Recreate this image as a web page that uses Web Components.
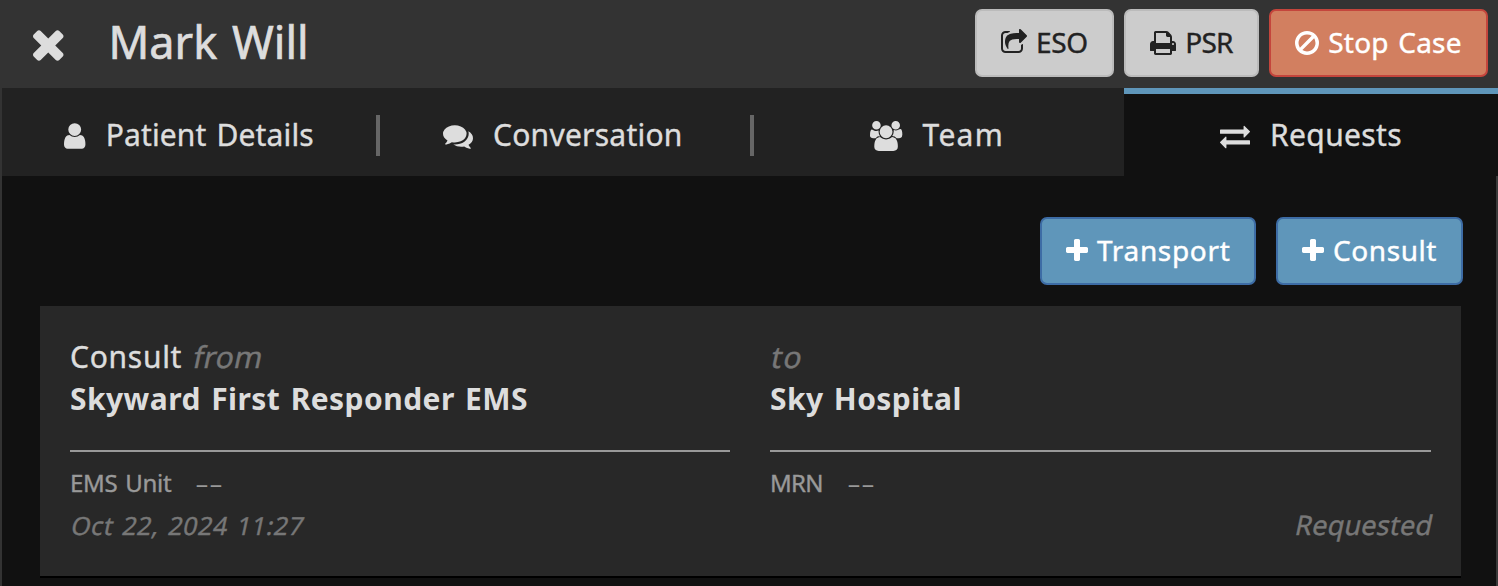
<!DOCTYPE html>
<html lang="en">
<head>
<meta charset="utf-8">
<title>Mark Will</title>
<style>
html,body{margin:0;height:100%;overflow:hidden;background:#111}
body{font-family:"Noto Sans","Open Sans",sans-serif;color:#ddd}
</style>
</head>
<body>
<case-view></case-view>
<script>
const ICONS = {
  times:['302 238 1188 1316','M1490 1322q0 40-28 68l-136 136q-28 28-68 28t-68-28l-294-294-294 294q-28 28-68 28t-68-28l-136-136q-28-28-28-68t28-68l294-294-294-294q-28-28-28-68t28-68l136-136q28-28 68-28t68 28l294 294 294-294q28-28 68-28t68 28l136 136q28 28 28 68t-28 68l-294 294 294 294q28 28 28 68z'],
  user:['256 0 1280 1792','M1536 1399q0 109-62.5 187t-150.5 78h-854q-88 0-150.5-78t-62.5-187q0-85 8.5-160.5t31.5-152 58.5-131 94-89 134.5-34.5q131 128 313 128t313-128q76 0 134.5 34.5t94 89 58.5 131 31.5 152 8.5 160.5zm-256-887q0 159-112.5 271.5t-271.5 112.5-271.5-112.5-112.5-271.5 112.5-271.5 271.5-112.5 271.5 112.5 112.5 271.5z'],
  comments:['0 0 1792 1792','M1408 768q0 139-94 257t-256.5 186.5-353.5 68.5q-86 0-176-16-124 88-278 128-36 9-86 16h-3q-11 0-20.5-8t-11.5-21q-1-3-1-6.5t.5-6.5 2-6l2.5-5 3.5-5.5 4-5 4.5-5 4-4.5q5-6 23-25t26-29.5 22.5-29 25-38.5 20.5-44q-124-72-195-177t-71-224q0-139 94-257t256.5-186.5 353.5-68.5 353.5 68.5 256.5 186.5 94 257zm384 256q0 120-71 224.5t-195 176.5q10 24 20.5 44t25 38.5 22.5 29 26 29.5 23 25q1 1 4 4.5t4.5 5 4 5 3.5 5.5l2.5 5 2 6 .5 6.5-1 6.5q-3 14-13 22t-22 7q-50-7-86-16-154-40-278-128-90 16-176 16-271 0-472-132 58 4 88 4 161 0 309-45t264-129q125-92 192-212t67-254q0-77-23-152 129 71 204 178t75 230z'],
  users:['64 0 1920 1792','M657 896q-162 5-265 128h-134q-82 0-138-40.5t-56-118.5q0-353 124-353 6 0 43.5 21t97.5 42.5 119 21.5q67 0 133-23-5 37-5 66 0 159 93 293zm1071 637q0 120-73 189.5t-194 69.5h-874q-121 0-194-69.5t-73-189.5q0-53 3.5-103.5t14-109 26.5-108.5 43-97.5 62-81 85.5-53.5 111.5-20q10 0 43 21.5t73 48 107 48 135 21.5 135-21.5 107-48 73-48 43-21.5q61 0 111.5 20t85.5 53.5 62 81 43 97.5 26.5 108.5 14 109 3.5 103.5zm-1024-1277q0 106-75 181t-181 75-181-75-75-181 75-181 181-75 181 75 75 181zm704 384q0 159-112.5 271.5t-271.5 112.5-271.5-112.5-112.5-271.5 112.5-271.5 271.5-112.5 271.5 112.5 112.5 271.5zm576 225q0 78-56 118.5t-138 40.5h-134q-103-123-265-128 93-134 93-293 0-29-5-66 66 23 133 23 59 0 119-21.5t97.5-42.5 43.5-21q124 0 124 353zm-128-609q0 106-75 181t-181 75-181-75-75-181 75-181 181-75 181 75 75 181z'],
  exchange:['0 0 1792 1792','M1792 1184v192q0 13-9.5 22.5t-22.5 9.5h-1376v192q0 13-9.5 22.5t-22.5 9.5q-12 0-24-10l-319-320q-9-9-9-22 0-14 9-23l320-320q9-9 23-9 13 0 22.5 9.5t9.5 22.5v192h1376q13 0 22.5 9.5t9.5 22.5zm0-544q0 14-9 23l-320 320q-9 9-23 9-13 0-22.5-9.5t-9.5-22.5v-192h-1376q-13 0-22.5-9.5t-9.5-22.5v-192q0-13 9.5-22.5t22.5-9.5h1376v-192q0-14 9-23t23-9q12 0 24 10l319 319q9 9 9 23z'],
  plus:['192 0 1408 1792','M1600 736v192q0 40-28 68t-68 28h-416v416q0 40-28 68t-68 28h-192q-40 0-68-28t-28-68v-416h-416q-40 0-68-28t-28-68v-192q0-40 28-68t68-28h416v-416q0-40 28-68t68-28h192q40 0 68 28t28 68v416h416q40 0 68 28t28 68z'],
  ban:['128 0 1536 1792','M1440 893q0-161-87-295l-754 753q137 89 297 89 111 0 211.5-43.5t173.5-116.5 116-174.5 43-212.5zm-999 299l755-754q-135-91-300-91-148 0-273 73t-198 199-73 274q0 162 89 299zm1223-299q0 157-61 300t-163.5 246-245 164-298.5 61-298.5-61-245-164-163.5-246-61-300 61-299.5 163.5-245.5 245-164 298.5-61 298.5 61 245 164 163.5 245.5 61 299.5z'],
  print:['64 0 1664 1792','M448 1536h896v-256h-896v256zm0-640h896v-384h-160q-40 0-68-28t-28-68v-160h-640v640zm1152 64q0-26-19-45t-45-19-45 19-19 45 19 45 45 19 45-19 19-45zm128 0v416q0 13-9.5 22.5t-22.5 9.5h-224v160q0 40-28 68t-68 28h-960q-40 0-68-28t-28-68v-160h-224q-13 0-22.5-9.5t-9.5-22.5v-416q0-79 56.5-135.5t135.5-56.5h64v-544q0-40 28-68t68-28h672q40 0 88 20t76 48l152 152q28 28 48 76t20 88v256h64q79 0 135.5 56.5t56.5 135.5z'],
  share:['64 0 1664 1792','M1472 989v259q0 119-84.5 203.5t-203.5 84.5h-832q-119 0-203.5-84.5t-84.5-203.5v-832q0-119 84.5-203.5t203.5-84.5h255q13 0 22.5 9.5t9.5 22.5q0 27-26 32-77 26-133 60-10 4-16 4h-112q-66 0-113 47t-47 113v832q0 66 47 113t113 47h832q66 0 113-47t47-113v-214q0-19 18-29 28-13 54-37 16-16 35-8 21 9 21 29zm237-496l-384 384q-18 19-45 19-12 0-25-5-39-17-39-59v-192h-160q-323 0-438 131-119 137-74 473 3 23-20 34-8 2-12 2-16 0-26-13-10-14-21-31t-39.5-68.5-49.5-99.5-38.5-114-17.5-122q0-49 3.5-91t14-90 28-88 47-81.5 68.5-74 94.5-61.5 124.5-48.5 159.5-30.5 196.5-11h160v-192q0-42 39-59 13-5 25-5 26 0 45 19l384 384q19 19 19 45t-19 45z']
};

class Base extends HTMLElement {
  constructor(){ super(); this.attachShadow({mode:'open'}); }
}

/* Glyph whose height is set by its font size (1em = 1792 units). */
customElements.define('fa-icon', class extends Base {
  connectedCallback(){
    const [box, d] = ICONS[this.getAttribute('name')];
    const [, , w, h] = box.split(' ');
    this.shadowRoot.innerHTML = `<style>:host{display:block;flex:none}svg{display:block;fill:currentColor;overflow:visible}</style>
      <svg viewBox="${box}" style="width:${w/1792}em;height:${h/1792}em"><path d="${d}"/></svg>`;
  }
});

/* One line of text tracked so that it fills the given advance width. */
customElements.define('fit-text', class extends Base {
  connectedCallback(){
    this.shadowRoot.innerHTML = `<style>:host{display:block;flex:none;white-space:nowrap;word-spacing:.07em;-webkit-text-stroke:var(--stroke,.4px) currentColor}
      :host([slant]){font-style:normal;transform:skewX(-12deg);transform-origin:0 70%}
      span{display:inline-block}</style><span><slot></slot></span>`;
    const fit = +this.getAttribute('fit');
    const span = this.shadowRoot.querySelector('span');
    const n = this.textContent.length;
    span.style.letterSpacing = (fit - span.offsetWidth) / n + 'px';
    this.style.width = fit + 'px';
  }
});

customElements.define('action-button', class extends Base {
  connectedCallback(){
    const fit = this.getAttribute('fit');
    this.shadowRoot.innerHTML = `<style>
      :host{display:block;flex:none}
      button{box-sizing:border-box;height:68px;display:flex;align-items:center;gap:9px;padding:0 24px;margin:0;
        font:inherit;font-size:28px;line-height:40px;border:2px solid #bbb;border-radius:7px;background:#ccc;color:#222}
      :host([kind=danger]) button{background:#d27f60;border-color:#c4453c;color:#fff}
      :host([kind=primary]) button{background:#5f96ba;border-color:#3d6ca5;color:#fff}
      fit-text{margin-top:-2px}
      </style><button><fa-icon name="${this.getAttribute('icon')}"></fa-icon><fit-text fit="${fit}">${this.textContent}</fit-text></button>`;
  }
});

customElements.define('case-header', class extends Base {
  connectedCallback(){
    this.shadowRoot.innerHTML = `<style>
      :host{display:flex;align-items:center;height:88px;box-sizing:border-box;background:#333;padding:0 10px 2px 33px}
      .close{font-size:46px;margin-top:1px}
      h1{margin:-2px auto 0 45px;font-size:45px;line-height:60px;font-weight:400;--stroke:.7px}
      .actions{display:flex;gap:10px}
      </style>
      <fa-icon class="close" name="times"></fa-icon><h1><fit-text fit="200">Mark Will</fit-text></h1>
      <div class="actions"><slot></slot></div>`;
  }
});

customElements.define('case-tab', class extends Base {
  connectedCallback(){
    this.shadowRoot.innerHTML = `<style>
      :host{display:flex;align-items:center;box-sizing:border-box;height:88px;border-top:6px solid transparent;background:#222;
        font-size:30px;line-height:42px}
      :host([active]){background:#111;border-top-color:#5f96ba}
      .in{flex:1;display:flex;align-items:center;justify-content:center;gap:20px}
      .rule{width:4px;height:41px;background:#666}
      :host([last]) .rule,:host([active]) .rule{display:none}
      :host([last]) .in,:host([icon=comments]) .in{padding-right:4px}
      fa-icon{margin-top:1px}
      </style><div class="in"><fa-icon name="${this.getAttribute('icon')}"></fa-icon><fit-text fit="${this.getAttribute('fit')}">${this.textContent}</fit-text></div><div class="rule"></div>`;
  }
});

customElements.define('request-party', class extends Base {
  connectedCallback(){
    this.shadowRoot.innerHTML = `<style>
      :host{display:block}
      .head{box-sizing:border-box;height:116px;border-bottom:2px solid #999;font-size:30px;line-height:42px}
      .foot{padding-top:10px;color:#999;font-size:24px;line-height:42px}
      </style><div class="head"><slot name="head"></slot></div><div class="foot"><slot name="foot"></slot></div>`;
  }
});

customElements.define('request-card', class extends Base {
  connectedCallback(){
    this.shadowRoot.innerHTML = `<style>
      :host{display:grid;grid-template-columns:660px 661px;column-gap:40px;box-sizing:border-box;height:272px;
        padding:30px 30px 0;background:#282828;border-bottom:2px solid #000}
      .row{display:flex;height:42px}
      i{color:#777} b{display:block;--stroke:0px}
      .from{margin-left:10px}.val{margin-left:24px}
      .val span{display:block;transform:scaleX(1.8);transform-origin:0 50%}
      .end{justify-content:flex-end}
      </style>
      <request-party>
        <div slot="head"><div class="row"><fit-text fit="112">Consult</fit-text><i class="from"><fit-text slant fit="69">from</fit-text></i></div>
        <b><fit-text fit="458">Skyward First Responder EMS</fit-text></b></div>
        <div slot="foot"><div class="row"><fit-text fit="101">EMS Unit</fit-text><div class="val"><span>--</span></div></div>
        <i class="row" style="font-size:25px"><fit-text slant fit="233">Oct 22, 2024 11:27</fit-text></i></div>
      </request-party>
      <request-party>
        <div slot="head"><i class="row"><fit-text slant fit="32">to</fit-text></i>
        <b><fit-text fit="192">Sky Hospital</fit-text></b></div>
        <div slot="foot"><div class="row"><fit-text fit="53">MRN</fit-text><div class="val"><span>--</span></div></div>
        <i class="row end" style="font-size:27px"><fit-text slant fit="137">Requested</fit-text></i></div>
      </request-party>`;
  }
});

customElements.define('case-view', class extends Base {
  connectedCallback(){
    this.shadowRoot.innerHTML = `<style>
      :host{display:block;box-sizing:border-box;height:586px;overflow:hidden;background:#111}
      .body{box-sizing:border-box;height:498px;border-left:2px solid #333}
      nav{display:grid;grid-template-columns:378px 374px 370px 374px}
      .main{box-sizing:border-box;height:410px;padding:41px 33px 0 38px;border-right:2px solid #3a3a3a}
      .add{display:flex;justify-content:flex-end;gap:20px;margin-bottom:21px}
      request-card{width:1421px}
      </style>
      <case-header>
        <action-button icon="share" fit="52">ESO</action-button>
        <action-button icon="print" fit="48">PSR</action-button>
        <action-button kind="danger" icon="ban" fit="134">Stop Case</action-button>
      </case-header>
      <div class="body">
        <nav>
          <case-tab icon="user" fit="208">Patient Details</case-tab>
          <case-tab icon="comments" fit="190">Conversation</case-tab>
          <case-tab icon="users" fit="81" last>Team</case-tab>
          <case-tab icon="exchange" fit="132" active>Requests</case-tab>
        </nav>
        <div class="main">
          <div class="add">
            <action-button kind="primary" icon="plus" fit="133">Transport</action-button>
            <action-button kind="primary" icon="plus" fit="104">Consult</action-button>
          </div>
          <request-card></request-card>
        </div>
      </div>`;
  }
});
</script>
</body>
</html>
